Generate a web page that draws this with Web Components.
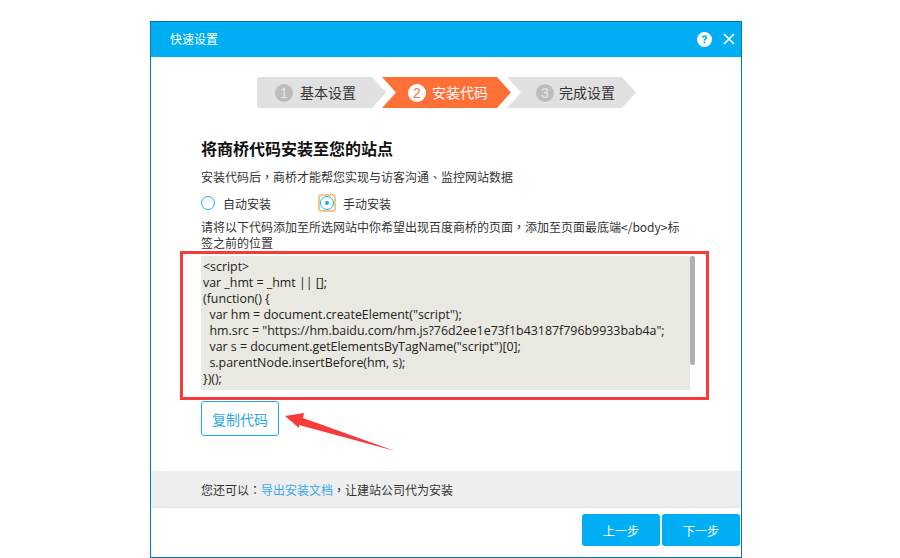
<!DOCTYPE html>
<html lang="zh">
<head>
<meta charset="utf-8">
<title>快速设置</title>
<style>
  html, body { margin: 0; background: #fff; }
  body { height: 558px; overflow: hidden; font-family: "Noto Sans CJK SC", "Noto Sans", sans-serif; }
  setup-dialog a { color: #3aa9ec; }
  setup-dialog b { font-weight: 400; font-family: "Noto Sans CJK TC", sans-serif; }
</style>
</head>
<body>
<setup-dialog heading="快速设置">
  <step-bar slot="steps">
    <step-item num="1" label="基本设置" pad="18" gap="7" first></step-item>
    <step-item num="2" label="安装代码" pad="26" gap="6" active></step-item>
    <step-item num="3" label="完成设置" pad="29" gap="5"></step-item>
  </step-bar>
  <install-panel></install-panel>
  <span slot="note">您还可以<b lang="zh-TW">：</b><a>导出安装文档</a><b lang="zh-TW">，</b>让建站公司代为安装</span>
  <flat-button slot="actions">上一步</flat-button>
  <flat-button slot="actions">下一步</flat-button>
</setup-dialog>

<script>
const CJK = '"Noto Sans CJK SC", "Noto Sans", sans-serif';

class SetupDialog extends HTMLElement {
  constructor() {
    super();
    this.attachShadow({ mode: 'open' });
  }

  connectedCallback() {
    this.shadowRoot.innerHTML = `
      <style>
        :host {
          display: flex;
          flex-direction: column;
          box-sizing: border-box;
          width: 592px;
          height: 537px;
          margin: 21px 0 0 150px;
          border: 1px solid #0478a6;
          background: #fff;
          font-family: ${CJK};
        }
        header {
          display: flex;
          align-items: center;
          height: 35px;
          padding: 0 6px 0 19px;
          background: #00aef3;
          color: #fff;
          font-size: 12px;
        }
        header span { flex: 1; padding-bottom: 2px; }
        header svg { display: block; margin-bottom: 1px; }
        .close { margin-left: 11px; }
        .steps { padding: 20px 0 0 106px; }
        main { flex: 1; }
        .note {
          display: flex;
          align-items: center;
          height: 36px;
          padding-left: 50px;
          background: #eee;
          border-bottom: 1px solid #e6e6e6;
          font-size: 12px;
          color: #333;
        }
        footer {
          display: flex;
          justify-content: flex-end;
          gap: 2px;
          height: 49px;
          padding: 6px 1px 0 0;
          box-sizing: border-box;
        }
        ::slotted(span) { color: #333; }
      </style>
      <header>
        <span>${this.getAttribute('heading') || ''}</span>
        <svg width="15" height="15" viewBox="0 0 15 15">
          <circle cx="7.5" cy="7.5" r="7.5" fill="#fff"/>
          <path d="M5 5.7c.1-1.6 1.1-2.4 2.6-2.4s2.6.8 2.6 2.1c0 1-.6 1.5-1.3 2-.6.4-.8.7-.8 1.4H6.6c0-1.1.3-1.6 1.1-2.2.5-.4.8-.6.8-1.1 0-.5-.4-.8-.9-.8-.6 0-1 .4-1 1z" fill="#00aef3"/>
          <rect x="6.6" y="9.6" width="1.7" height="1.8" fill="#00aef3"/>
        </svg>
        <svg class="close" width="12" height="12" viewBox="0 0 12 12">
          <path d="M1 1l10 10M11 1L1 11" stroke="#fff" stroke-width="1.7" fill="none"/>
        </svg>
      </header>
      <div class="steps"><slot name="steps"></slot></div>
      <main><slot></slot></main>
      <div class="note"><slot name="note"></slot></div>
      <footer><slot name="actions"></slot></footer>
    `;
  }
}

class StepBar extends HTMLElement {
  constructor() {
    super();
    this.attachShadow({ mode: 'open' });
    this.shadowRoot.innerHTML = `
      <style>
        :host { display: flex; gap: 0; }
        ::slotted(step-item) { margin-right: -4px; }
      </style>
      <slot></slot>
    `;
  }
}

class StepItem extends HTMLElement {
  constructor() {
    super();
    this.attachShadow({ mode: 'open' });
  }

  connectedCallback() {
    const active = this.hasAttribute('active');
    const first = this.hasAttribute('first');
    const bg = active ? '#ff7037' : '#e1e1e1';
    // first step has a flat rounded left edge, the others are notched
    const shape = first
      ? 'M2 0H115L129 15.5 115 31H2Q0 31 0 29V2Q0 0 2 0Z'
      : 'M0 0H115L129 15.5 115 31H0L14 15.5Z';
    this.shadowRoot.innerHTML = `
      <style>
        :host {
          display: block;
          position: relative;
          width: 129px;
          height: 31px;
          font-family: ${CJK};
        }
        svg { position: absolute; left: 0; top: 0; }
        .text {
          position: relative;
          display: flex;
          align-items: center;
          height: 31px;
          padding-left: ${this.getAttribute('pad')}px;
          font-size: 14px;
          color: ${active ? '#fff' : '#333'};
        }
        .text span { padding-bottom: 2px; }
        i {
          display: block;
          width: 18px;
          height: 18px;
          margin-right: ${this.getAttribute('gap')}px;
          border-radius: 50%;
          background: ${active ? '#fff' : '#bdbdbd'};
          color: ${active ? '#ff7037' : '#e8e8e8'};
          font: normal 14px/18px "Liberation Sans", sans-serif;
          text-align: center;
        }
      </style>
      <svg width="129" height="31"><path d="${shape}" fill="${bg}"/></svg>
      <div class="text"><i>${this.getAttribute('num')}</i><span>${this.getAttribute('label')}</span></div>
    `;
  }
}

class RadioOption extends HTMLElement {
  constructor() {
    super();
    this.attachShadow({ mode: 'open' });
  }

  connectedCallback() {
    const checked = this.hasAttribute('checked');
    this.shadowRoot.innerHTML = `
      <style>
        :host {
          display: flex;
          align-items: center;
          font-size: 12px;
          color: #333;
        }
        .mark {
          box-sizing: border-box;
          width: 16px;
          height: 16px;
          margin-right: ${checked ? 8 : 7}px;
          display: flex;
          align-items: center;
          justify-content: center;
        }
        .focus {
          outline: 2px solid #f2c98a;
          outline-offset: -1px;
          border-radius: 2px;
        }
      </style>
      <span class="mark ${checked ? 'focus' : ''}">
        <svg width="14" height="14" viewBox="0 0 14 14">
          <circle cx="7" cy="7" r="6.5" fill="#fff" stroke="#1eaef0"/>
          ${checked ? '<circle cx="7" cy="7" r="2" fill="#1eaef0"/>' : ''}
        </svg>
      </span>
      <slot></slot>
    `;
  }
}

class CodeBox extends HTMLElement {
  constructor() {
    super();
    this.attachShadow({ mode: 'open' });
    this.shadowRoot.innerHTML = `
      <style>
        :host {
          display: flex;
          width: 494px;
          height: 134px;
          overflow: hidden;
        }
        pre {
          box-sizing: border-box;
          width: 489px;
          height: 134px;
          margin: 0;
          padding: 3px 0 0 2px;
          overflow: hidden;
          background: #e9e8e1;
          color: #222;
          font: 12.4px/16px "Open Sans", "Noto Sans", sans-serif;
        }
        .track { width: 5px; }
        .thumb { height: 109px; background: #b0b0b0; border-radius: 2px; }
      </style>
      <pre><slot></slot></pre>
      <div class="track"><div class="thumb"></div></div>
    `;
  }
}

class OutlineButton extends HTMLElement {
  constructor() {
    super();
    this.attachShadow({ mode: 'open' });
    this.shadowRoot.innerHTML = `
      <style>
        :host {
          display: flex;
          align-items: center;
          justify-content: center;
          box-sizing: border-box;
          width: 78px;
          height: 35px;
          border: 1px solid #14aff0;
          border-radius: 3px;
          color: #2da7e8;
          font-size: 14px;
        }
      </style>
      <slot></slot>
    `;
  }
}

class FlatButton extends HTMLElement {
  constructor() {
    super();
    this.attachShadow({ mode: 'open' });
    this.shadowRoot.innerHTML = `
      <style>
        :host {
          display: flex;
          align-items: center;
          justify-content: center;
          width: 78px;
          height: 32px;
          border-radius: 3px;
          background: #00aef3;
          color: #fff;
          font-size: 12px;
          font-family: ${CJK};
        }
      </style>
      <slot></slot>
    `;
  }
}

class InstallPanel extends HTMLElement {
  constructor() {
    super();
    this.attachShadow({ mode: 'open' });
  }

  connectedCallback() {
    const code = [
      '&lt;script&gt;',
      'var _hmt = _hmt || [];',
      '(function() {',
      '  var hm = document.createElement("script");',
      '  hm.src = "https://hm.baidu.com/hm.js?76d2ee1e73f1b43187f796b9933bab4a";',
      '  var s = document.getElementsByTagName("script")[0];',
      '  s.parentNode.insertBefore(hm, s);',
      '})();',
      '&lt;/script&gt;'
    ].join('\n');
    this.shadowRoot.innerHTML = `
      <style>
        :host {
          display: block;
          position: relative;
          padding: 28px 0 0 50px;
          font-family: ${CJK};
          color: #333;
        }
        h2 {
          margin: 0;
          font-size: 16px;
          line-height: 24px;
          font-weight: 700;
          color: #111;
        }
        p { margin: 0; font-size: 12px; line-height: 16px; }
        b { font-weight: 400; font-family: "Noto Sans CJK TC", sans-serif; }
        .lead { margin-top: 9px; }
        .radios { display: flex; margin: 9px 0 0 -1px; height: 18px; align-items: center; }
        radio-option { width: 119px; }
        .hint { margin-top: 7px; width: 490px; line-height: 16px; }
        code-box { margin-top: 5px; }
        outline-button { margin-top: 11px; }
        .callout { position: absolute; left: 0; top: 0; pointer-events: none; overflow: visible; }
      </style>
      <h2>将商桥代码安装至您的站点</h2>
      <p class="lead">安装代码后<b lang="zh-TW">，</b>商桥才能帮您实现与访客沟通<b lang="zh-TW">、</b>监控网站数据</p>
      <div class="radios">
        <radio-option>自动安装</radio-option>
        <radio-option checked>手动安装</radio-option>
      </div>
      <p class="hint">请将以下代码添加至所选网站中你希望出现百度商桥的页面<b lang="zh-TW">，</b>添加至页面最底端&lt;/body&gt;标<br>签之前的位置</p>
      <code-box>${code}</code-box>
      <outline-button>复制代码</outline-button>
      <svg class="callout" width="590" height="420" viewBox="151 108 590 420">
        <rect x="181.5" y="252.5" width="526" height="146" fill="none" stroke="#f93a3a" stroke-width="3"/>
        <polygon points="285,416 304,413 303,418 395,451 299,425 299,428" fill="#f93a3a"/>
      </svg>
    `;
  }
}

customElements.define('setup-dialog', SetupDialog);
customElements.define('step-bar', StepBar);
customElements.define('step-item', StepItem);
customElements.define('radio-option', RadioOption);
customElements.define('code-box', CodeBox);
customElements.define('outline-button', OutlineButton);
customElements.define('flat-button', FlatButton);
customElements.define('install-panel', InstallPanel);
</script>
</body>
</html>
